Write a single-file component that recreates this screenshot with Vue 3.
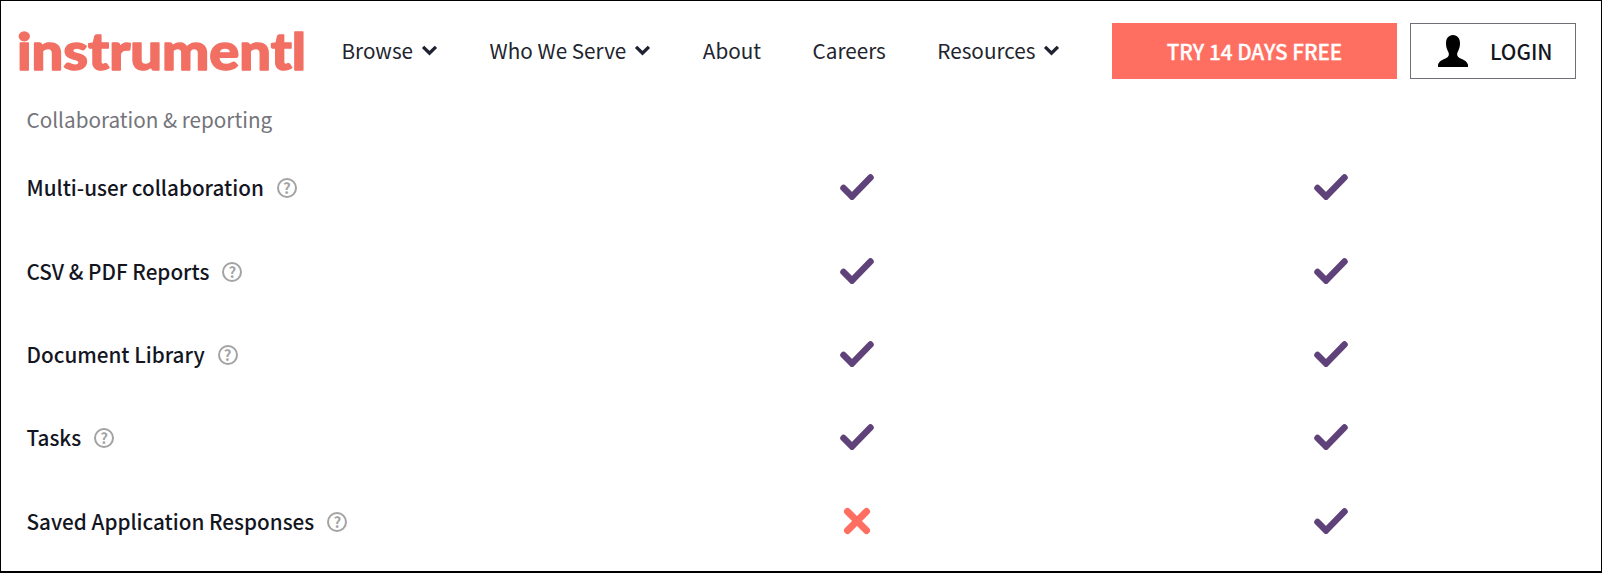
<template>
  <div class="page">
    <!-- header -->
    <header class="site-header">
      <svg class="logo" viewBox="0 0 326 80" width="326" height="80">
        <text x="2" y="59" textLength="289" lengthAdjust="spacingAndGlyphs">instrumentl</text>
      </svg>
      <nav class="nav">
        <a v-for="link in links" :key="link.name" class="nav-link">
          {{ link.name }}
          <svg v-if="link.menu" class="caret" viewBox="0 0 18 12" width="17" height="11">
            <path d="M2 2l7 7 7-7" fill="none" stroke="#1f2230" stroke-width="3.600" />
          </svg>
        </a>
      </nav>
      <a class="btn-try">TRY 14 DAYS FREE</a>
      <a class="btn-login">
        <svg class="user" viewBox="0 0 30 29" width="30" height="32" preserveAspectRatio="none">
          <path
            d="M15 0c4.600 0 7 3.300 7 7.500 0 2.700-.7 5.200-1.800 7-.8 1.300-1.200 2.300-1 3.600.2 1.400 1.400 2.300 3.400 3.100 3.200 1.300 6.300 2.400 7.400 5.800V29H0v-2c1.100-3.400 4.200-4.500 7.400-5.800 2-.8 3.200-1.700 3.400-3.100.2-1.300-.2-2.300-1-3.600-1.100-1.800-1.800-4.300-1.800-7C8 3.300 10.400 0 15 0z"
            fill="#000"
          />
        </svg>
        <span>LOGIN</span>
      </a>
    </header>

    <!-- feature table -->
    <section class="features">
      <h3 class="group-title">Collaboration &amp; reporting</h3>
      <div v-for="row in rows" :key="row.name" class="row">
        <div class="row-name">
          <span>{{ row.name }}</span>
          <span class="help">?</span>
        </div>
        <div class="cell">
          <svg v-if="row.first" class="mark" viewBox="0 0 34 26" width="34" height="26">
            <path d="M3.500 14l8.500 8.500L30.500 3.500" fill="none" stroke="#5f4279" stroke-width="6.500" stroke-linecap="round" />
          </svg>
          <svg v-else class="mark" viewBox="0 0 28 28" width="28" height="28">
            <path d="M4.500 4.500l19 19M23.500 4.500l-19 19" fill="none" stroke="#ff6f61" stroke-width="7" stroke-linecap="round" />
          </svg>
        </div>
        <div class="cell">
          <svg class="mark" viewBox="0 0 34 26" width="34" height="26">
            <path d="M3.500 14l8.500 8.500L30.500 3.500" fill="none" stroke="#5f4279" stroke-width="6.500" stroke-linecap="round" />
          </svg>
        </div>
      </div>
    </section>
  </div>
</template>

<script setup>
const links = [
  { name: "Browse", menu: true },
  { name: "Who We Serve", menu: true },
  { name: "About", menu: false },
  { name: "Careers", menu: false },
  { name: "Resources", menu: true }
];

const rows = [
  { name: "Multi-user collaboration", first: true },
  { name: "CSV & PDF Reports", first: true },
  { name: "Document Library", first: true },
  { name: "Tasks", first: true },
  { name: "Saved Application Responses", first: false }
];
</script>

<style>
html,
body {
  margin: 0;
  background: #fff;
}
</style>

<style scoped>
.page {
  box-sizing: border-box;
  width: 1602px;
  height: 573px;
  border: 1px solid #000;
  border-bottom-width: 2px;
  overflow: hidden;
  background: #fff;
  color: #14161f;
  font-family: "Noto Sans CJK SC", "Noto Sans", sans-serif;
}

/* header */
.site-header {
  display: flex;
  align-items: center;
  height: 56px;
  padding: 22px 0 0 14px;
}

.logo {
  flex: none;
  margin: -12px 0;
  fill: #f26f63;
  stroke: #f26f63;
  stroke-width: 1.500px;
  stroke-linejoin: round;
  font-family: "Lato", sans-serif;
  font-size: 52px;
  font-weight: 900;
}

.nav {
  display: flex;
  gap: 51.500px;
  width: 770px;
  margin-left: 0.500px;
  margin-right: 0.500px;
  transform: translateY(-1px);
}

.nav-link {
  display: flex;
  align-items: center;
  gap: 8px;
  font-size: 20.700px;
  line-height: 30px;
  color: #22242e;
  white-space: nowrap;
}

.caret {
  margin-top: 1px;
}

.btn-try {
  display: flex;
  align-items: center;
  justify-content: center;
  width: 285px;
  height: 56px;
  background: #ff6f61;
  color: #fff;
  font-size: 20.700px;
  font-weight: 500;
  -webkit-text-stroke: 0.300px #fff;
}

.btn-login {
  box-sizing: border-box;
  display: flex;
  align-items: center;
  gap: 22px;
  width: 166px;
  height: 56px;
  margin-left: 13px;
  padding-left: 27px;
  border: 1px solid #6f6f78;
  font-size: 20.700px;
  font-weight: 500;
  color: #14161f;
}

/* features */
.features {
  padding: 24px 0 0 25.500px;
}

.group-title {
  margin: 0 0 10.500px;
  font-size: 20.700px;
  font-weight: 400;
  line-height: 32px;
  color: #74747a;
}

.row {
  display: grid;
  grid-template-columns: 593px 474px 474px;
  align-items: center;
  height: 83.400px;
}

.row-name {
  display: flex;
  align-items: center;
  gap: 13px;
  font-size: 20.700px;
  font-weight: 500;
  line-height: 30px;
}

.help {
  box-sizing: border-box;
  width: 20px;
  height: 20px;
  margin-top: 2px;
  border: 2px solid #a3a3a3;
  border-radius: 50%;
  color: #a3a3a3;
  font-size: 15px;
  font-weight: 700;
  line-height: 16px;
  text-align: center;
}

.cell {
  display: flex;
  justify-content: center;
}
</style>
